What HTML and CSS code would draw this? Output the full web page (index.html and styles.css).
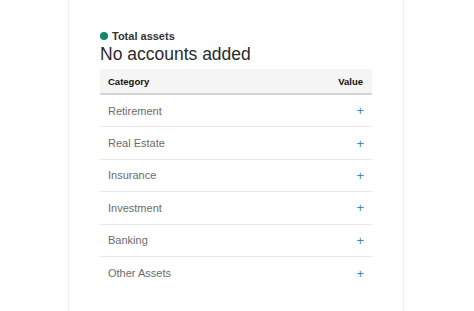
FILE: index.html
```html
<!DOCTYPE html>
<html>
<head>
<meta charset="utf-8">
<link rel="stylesheet" href="styles.css">
</head>
<body>
<div class="card">
  <div class="label"><span class="dot"></span>Total assets</div>
  <div class="title">No accounts added</div>
  <div class="table">
    <div class="head"><span>Category</span><span>Value</span></div>
    <div class="row"><span>Retirement</span><span class="plus">+</span></div>
    <div class="row"><span>Real Estate</span><span class="plus">+</span></div>
    <div class="row"><span>Insurance</span><span class="plus">+</span></div>
    <div class="row"><span>Investment</span><span class="plus">+</span></div>
    <div class="row"><span>Banking</span><span class="plus">+</span></div>
    <div class="row last"><span>Other Assets</span><span class="plus">+</span></div>
  </div>
</div>
</body>
</html>
```
FILE: styles.css
```css
html, body {
  margin: 0;
  padding: 0;
  background: #fff;
  height: 100%;
}
body {
  font-family: "Liberation Sans", Arial, sans-serif;
  overflow: hidden;
}
.card {
  margin-left: 68px;
  width: 336px;
  box-sizing: border-box;
  height: 311px;
  border-left: 1px solid #efefef;
  border-right: 1px solid #efefef;
  padding: 29px 31px 0 31px;
}
.label {
  display: flex;
  align-items: center;
  font-size: 11px;
  font-weight: bold;
  color: #333;
  line-height: 14px;
  height: 14px;
}
.dot {
  width: 8px;
  height: 8px;
  border-radius: 50%;
  background: #11876a;
  margin-right: 4px;
}
.title {
  font-size: 17.5px;
  color: #2a2a2a;
  line-height: 22px;
  margin-top: 0;
  height: 26px;
}
.table {
  display: flex;
  flex-direction: column;
}
.head {
  display: flex;
  justify-content: space-between;
  align-items: center;
  background: #f5f5f6;
  border-bottom: 2px solid #d3d3d6;
  height: 26px;
  box-sizing: border-box;
  padding: 0 9px 0 8px;
  font-size: 9.5px;
  font-weight: bold;
  color: #111;
}
.row {
  display: flex;
  justify-content: space-between;
  align-items: center;
  height: 32.4px;
  box-sizing: border-box;
  border-bottom: 1px solid #e8e8ea;
  padding: 0 8px;
  font-size: 11px;
  color: #6b6b6b;
}
.row.last {
  border-bottom: none;
}
.plus {
  color: #3a8db3;
  font-size: 13px;
  line-height: 1;
}
```
